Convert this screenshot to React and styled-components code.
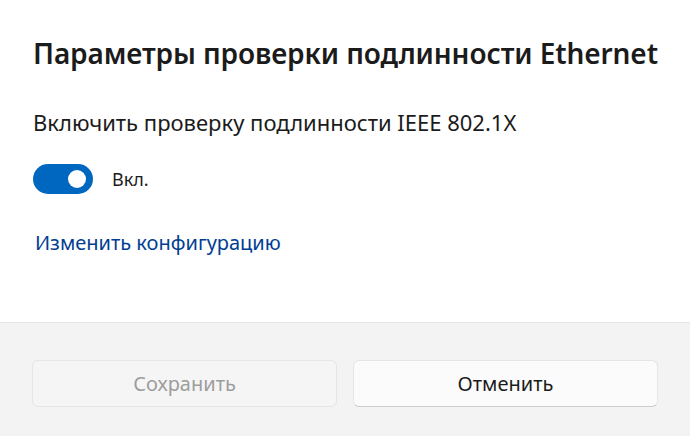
import styled, { createGlobalStyle } from "styled-components";

const Global = createGlobalStyle`
  html, body {
    margin: 0;
    padding: 0;
    background: #ffffff;
  }
  body {
    font-family: "Noto Sans", "Open Sans", sans-serif;
    color: #1b1b1b;
  }
`;

const Dialog = styled.div`
  width: 690px;
  height: 436px;
  display: flex;
  flex-direction: column;
  background: #ffffff;
  overflow: hidden;
`;

const Body = styled.div`
  flex: 1;
  padding: 35px 33px 0 33px;
  display: flex;
  flex-direction: column;
  align-items: flex-start;
`;

const Title = styled.h1`
  margin: 0;
  font-size: 28px;
  font-weight: 600;
  line-height: 36px;
  letter-spacing: -0.1px;
  color: #1b1b1b;
  white-space: nowrap;
`;

const Label = styled.div`
  margin-top: 38px;
  font-size: 22px;
  line-height: 26px;
  color: #1b1b1b;
  white-space: nowrap;
`;

const ToggleRow = styled.div`
  margin-top: 29px;
  display: flex;
  align-items: center;
  gap: 19px;
`;

const Track = styled.div`
  width: 60px;
  height: 30px;
  border-radius: 15px;
  background: ${(p) => (p.$on ? "#0067c0" : "#ffffff")};
  display: flex;
  align-items: center;
  justify-content: ${(p) => (p.$on ? "flex-end" : "flex-start")};
  padding: 0 7px;
  box-sizing: border-box;
`;

const Knob = styled.div`
  width: 18px;
  height: 18px;
  border-radius: 50%;
  background: #ffffff;
`;

const ToggleText = styled.span`
  font-size: 18px;
  color: #1b1b1b;
`;

const Link = styled.a`
  margin-top: 36px;
  margin-left: 2px;
  font-size: 20px;
  line-height: 26px;
  color: #003e92;
  text-decoration: none;
  white-space: nowrap;
`;

const Footer = styled.div`
  height: 114px;
  border-top: 1px solid #e5e5e5;
  background: #f3f3f3;
  display: grid;
  grid-template-columns: 1fr 1fr;
  gap: 16px;
  padding: 37px 32px 0 32px;
  box-sizing: border-box;
  align-items: start;
`;

const Button = styled.button`
  height: 47px;
  border-radius: 6px;
  font-family: "Noto Sans", "Open Sans", sans-serif;
  font-size: 20px;
  cursor: default;
  border: 1px solid #e5e5e5;
  border-bottom-color: ${(p) => (p.disabled ? "#e5e5e5" : "#cccccc")};
  background: ${(p) => (p.disabled ? "#f5f5f5" : "#fbfbfb")};
  color: ${(p) => (p.disabled ? "#9d9d9d" : "#1b1b1b")};
`;

export default function App() {
  return (
    <>
      <Global />
      <Dialog>
        <Body>
          <Title>Параметры проверки подлинности Ethernet</Title>
          <Label>Включить проверку подлинности IEEE 802.1X</Label>
          <ToggleRow>
            <Track $on>
              <Knob />
            </Track>
            <ToggleText>Вкл.</ToggleText>
          </ToggleRow>
          <Link href="#">Изменить конфигурацию</Link>
        </Body>
        <Footer>
          <Button disabled>Сохранить</Button>
          <Button>Отменить</Button>
        </Footer>
      </Dialog>
    </>
  );
}
